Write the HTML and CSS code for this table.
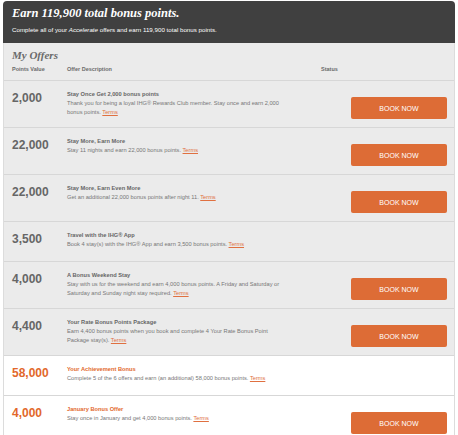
FILE: index.html
```html
<!DOCTYPE html>
<html>
<head>
<meta charset="utf-8">
<link rel="stylesheet" href="styles.css">
</head>
<body>
<div class="wrap">
  <div class="hero">
    <h1 class="hero-title">Earn 119,900 total bonus points.</h1>
    <p class="hero-sub">Complete all of your <em>Accelerate</em> offers and earn 119,900 total bonus points.</p>
  </div>
  <div class="panel">
    <h2 class="panel-title">My Offers</h2>
    <div class="row head">
      <div>Points Value</div>
      <div>Offer Description</div>
      <div class="status-h">Status</div>
    </div>
    <div class="row">
      <div class="pts">2,000</div>
      <div class="desc"><div class="ttl">Stay Once Get 2,000 bonus points</div>Thank you for being a loyal IHG® Rewards Club member. Stay once and earn 2,000 bonus points. <a class="terms">Terms</a></div>
      <div class="act"><a class="btn">BOOK NOW</a></div>
    </div>
    <div class="row">
      <div class="pts">22,000</div>
      <div class="desc"><div class="ttl">Stay More, Earn More</div>Stay 11 nights and earn 22,000 bonus points. <a class="terms">Terms</a></div>
      <div class="act"><a class="btn">BOOK NOW</a></div>
    </div>
    <div class="row">
      <div class="pts">22,000</div>
      <div class="desc"><div class="ttl">Stay More, Earn Even More</div>Get an additional 22,000 bonus points after night 11. <a class="terms">Terms</a></div>
      <div class="act"><a class="btn">BOOK NOW</a></div>
    </div>
    <div class="row">
      <div class="pts">3,500</div>
      <div class="desc"><div class="ttl">Travel with the IHG® App</div>Book 4 stay(s) with the IHG® App and earn 3,500 bonus points. <a class="terms">Terms</a></div>
      <div class="act"></div>
    </div>
    <div class="row">
      <div class="pts">4,000</div>
      <div class="desc"><div class="ttl">A Bonus Weekend Stay</div>Stay with us for the weekend and earn 4,000 bonus points. A Friday and Saturday or Saturday and Sunday night stay required. <a class="terms">Terms</a></div>
      <div class="act"><a class="btn">BOOK NOW</a></div>
    </div>
    <div class="row">
      <div class="pts">4,400</div>
      <div class="desc"><div class="ttl">Your Rate Bonus Points Package</div>Earn 4,400 bonus points when you book and complete 4 Your Rate Bonus Point Package stay(s). <a class="terms">Terms</a></div>
      <div class="act"><a class="btn">BOOK NOW</a></div>
    </div>
    <div class="row special">
      <div class="pts">58,000</div>
      <div class="desc wide"><div class="ttl">Your Achievement Bonus</div>Complete 5 of the 6 offers and earn (an additional) 58,000 bonus points. <a class="terms">Terms</a></div>
      <div class="act"></div>
    </div>
    <div class="row special">
      <div class="pts">4,000</div>
      <div class="desc"><div class="ttl">January Bonus Offer</div>Stay once in January and get 4,000 bonus points. <a class="terms">Terms</a></div>
      <div class="act"><a class="btn">BOOK NOW</a></div>
    </div>
  </div>
</div>
</body>
</html>
```
FILE: styles.css
```css
* { box-sizing: border-box; }
html, body { margin: 0; padding: 0; background: #fff; }
body { font-family: "Liberation Sans", Arial, sans-serif; color: #666; }
.wrap { padding: 1px 3px 0 3px; }
.hero {
  background: #404040;
  border-radius: 4px 4px 0 0;
  height: 42px;
  padding: 5px 9px 0 9px;
  color: #fff;
}
.hero-title {
  margin: 0;
  font-family: "Liberation Serif", "Times New Roman", serif;
  font-style: italic;
  font-weight: bold;
  font-size: 12.5px;
  line-height: 15px;
}
.hero-sub {
  margin: 4px 0 0 0;
  font-size: 6.2px;
  line-height: 9px;
}
.panel {
  background: #ebebeb;
  border: 1px solid #dcdcdc;
  border-top: none;
}
.panel-title {
  margin: 0;
  padding: 5px 9px 0 8px;
  font-family: "Liberation Serif", "Times New Roman", serif;
  font-style: italic;
  font-weight: bold;
  font-size: 11px;
  line-height: 14px;
  color: #6a6a6a;
}
.row {
  display: grid;
  grid-template-columns: 55px 242px 1fr;
  padding: 9px 7px 8px 8px;
  min-height: 40px;
  border-top: 1px solid #d7d7d7;
}
.row.head {
  border-top: none;
  min-height: 0;
  padding: 3px 7px 6px 8px;
  font-weight: bold;
  font-size: 5.5px;
  line-height: 9px;
  color: #6a6a6a;
}
.status-h { padding-left: 12px; }
.pts {
  font-weight: bold;
  font-size: 12px;
  line-height: 14px;
  color: #666;
  padding-top: 1px;
}
.desc {
  font-size: 5.7px;
  line-height: 9px;
  color: #777;
  max-width: 215px;
}
.desc.wide { max-width: 240px; }
.ttl { font-weight: bold; color: #666; }
.terms { color: #e07040; text-decoration: underline; }
.act { display: flex; justify-content: flex-end; align-items: flex-start; }
.btn {
  display: flex;
  align-items: center;
  justify-content: center;
  margin-top: 7px;
  width: 96px;
  height: 22px;
  background: #dd6c36;
  border-radius: 2px;
  color: #fff;
  font-size: 7px;
}
.row.special { background: #fff; }
.row.special .pts { color: #e2682b; }
.row.special .ttl { color: #e2682b; }
```
